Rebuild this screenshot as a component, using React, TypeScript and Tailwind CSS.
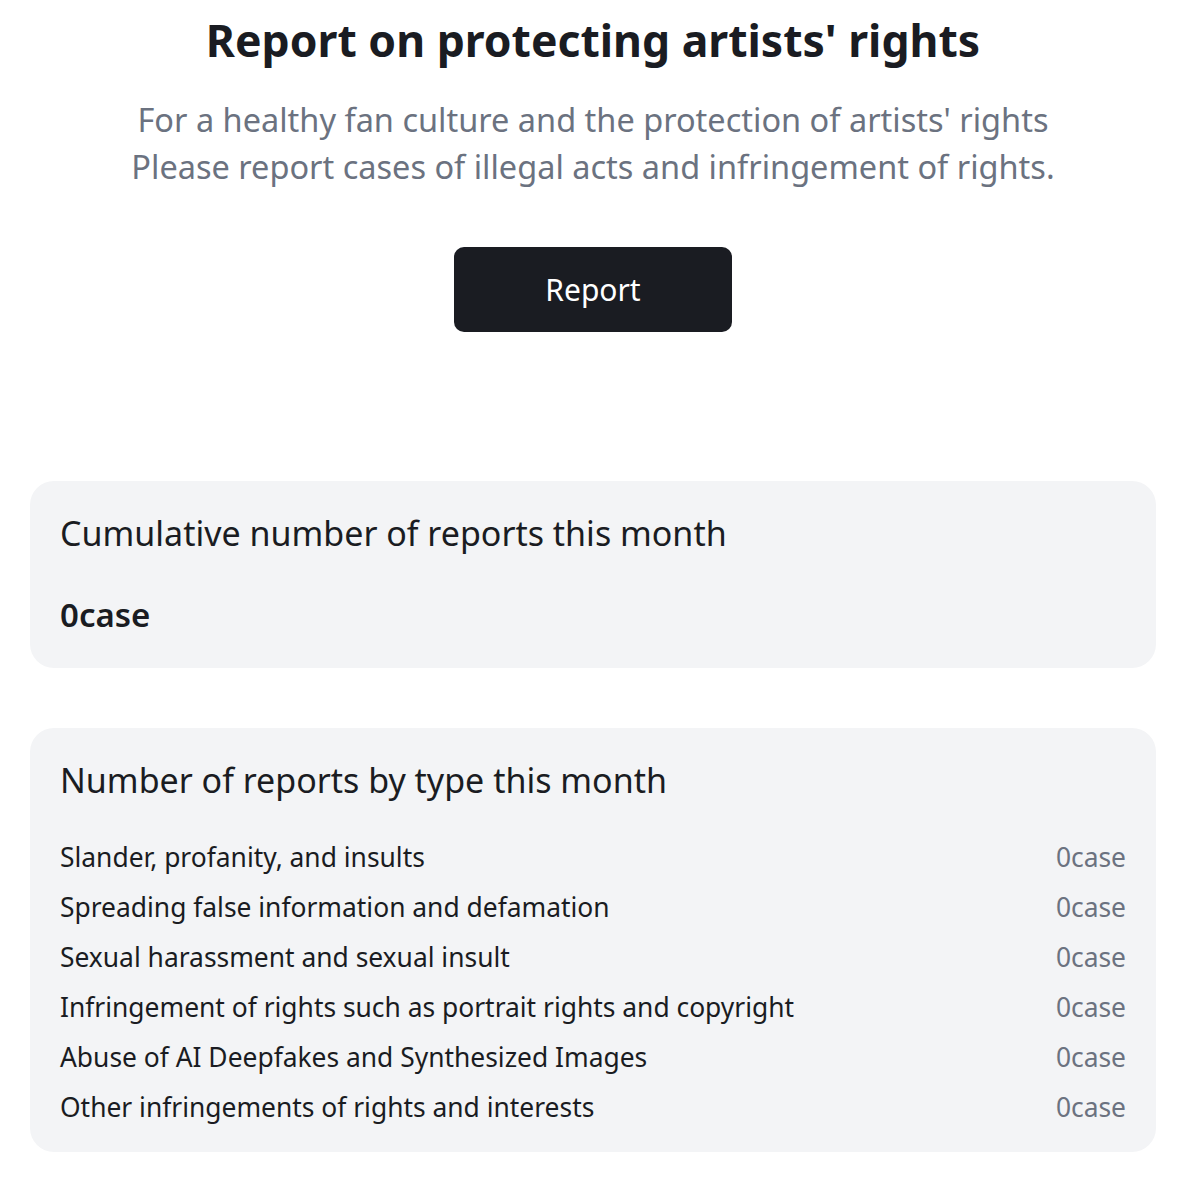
const types = [
  'Slander, profanity, and insults',
  'Spreading false information and defamation',
  'Sexual harassment and sexual insult',
  'Infringement of rights such as portrait rights and copyright',
  'Abuse of AI Deepfakes and Synthesized Images',
  'Other infringements of rights and interests',
];

export default function App() {
  return (
    <main className="min-h-screen bg-white text-[#1a1c22] font-['Noto_Sans',sans-serif]">
      <div className="px-[30px] pt-[12px]">
        <div className="flex flex-col items-center text-center">
          <h1 className="text-[44.5px] font-bold leading-[56px]">Report on protecting artists' rights</h1>
          <p className="mt-[28px] text-[32.5px] leading-[47px] text-[#6b7280]">
            For a healthy fan culture and the protection of artists' rights
            <br />
            Please report cases of illegal acts and infringement of rights.
          </p>
          <button className="mt-[57px] h-[85px] w-[278px] rounded-[10px] bg-[#1a1c22] text-[30px] text-white">
            Report
          </button>
        </div>

        <section className="mt-[149px] rounded-[24px] bg-[#f3f4f6] px-[30px] pt-[28px] pb-[31px]">
          <h2 className="text-[34px] leading-[48px]">Cumulative number of reports this month</h2>
          <div className="mt-[36px] text-[33px] font-semibold leading-[44px]">0case</div>
        </section>

        <section className="mt-[60px] rounded-[24px] bg-[#f3f4f6] px-[30px] pt-[28px] pb-[20px]">
          <h2 className="text-[34px] leading-[48px]">Number of reports by type this month</h2>
          <ul className="mt-[28px]">
            {types.map((t) => (
              <li key={t} className="flex justify-between text-[26.4px] leading-[50px]">
                <span>{t}</span>
                <span className="text-[#6b7280]">0case</span>
              </li>
            ))}
          </ul>
        </section>
      </div>
    </main>
  );
}
